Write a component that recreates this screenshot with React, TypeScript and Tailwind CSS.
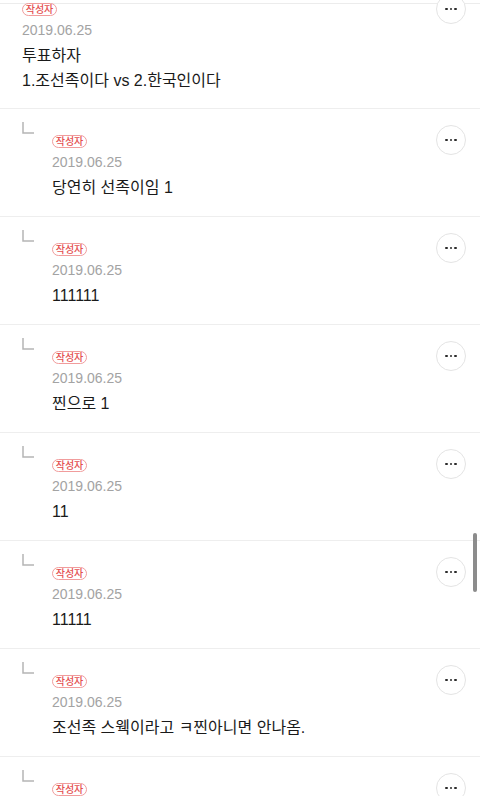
import React from "react";

const FONT = '"Liberation Sans", "Noto Sans CJK KR", sans-serif';

function Badge() {
  return (
    <div className="flex h-[13px] w-[35px] items-center justify-center rounded-full border border-[#f19c9c] text-[10px] font-medium leading-none text-[#e45050]">
      작성자
    </div>
  );
}

function MoreButton({ className = "" }: { className?: string }) {
  return (
    <div
      className={`flex h-[30px] w-[30px] shrink-0 items-center justify-center gap-[2px] rounded-full border border-[#e4e4e4] bg-white ${className}`}
    >
      <span className="h-[2.5px] w-[2.5px] rounded-full bg-[#2a2a2a]" />
      <span className="h-[2.5px] w-[2.5px] rounded-full bg-[#2a2a2a]" />
      <span className="h-[2.5px] w-[2.5px] rounded-full bg-[#2a2a2a]" />
    </div>
  );
}

function Corner() {
  return (
    <svg width="12" height="12" viewBox="0 0 12 12" className="mt-[13px] shrink-0">
      <path d="M1 0 V11 H12" fill="none" stroke="#b5b5b5" strokeWidth="1.5" />
    </svg>
  );
}

function ReplyRow({ text }: { text: string }) {
  return (
    <div className="flex h-[108px] shrink-0 items-start border-t border-[#eeeeee] pl-[22px]">
      <Corner />
      <div className="ml-[18px] mt-[26px] flex-1">
        <Badge />
        <div className="mt-[5px] text-[14px] leading-[18px] text-[#a3a3a3]">2019.06.25</div>
        <div className="mt-[6px] text-[16px] leading-[22px] text-[#1a1a1a]">{text}</div>
      </div>
      <MoreButton className="mr-[14px] mt-[16px]" />
    </div>
  );
}

export default function App() {
  const replies = [
    "당연히 선족이임 1",
    "111111",
    "찐으로 1",
    "11",
    "11111",
    "조선족 스웩이라고 ㅋ찐아니면 안나옴.",
    "ㅋㅋ",
  ];
  return (
    <div
      className="relative flex h-[796px] w-[480px] flex-col overflow-hidden bg-white"
      style={{ fontFamily: FONT }}
    >
      <div className="absolute left-0 top-[3px] h-px w-full bg-[#ececec]" />
      <div className="relative flex h-[108px] shrink-0 items-start pl-[22px]">
        <div className="mt-[3px] flex-1">
          <Badge />
          <div className="mt-[5px] text-[14px] leading-[18px] text-[#a3a3a3]">2019.06.25</div>
          <div className="mt-[4px] text-[16px] leading-[25px] text-[#1a1a1a]">
            <div>투표하자</div>
            <div>1.조선족이다 vs 2.한국인이다</div>
          </div>
        </div>
        <MoreButton className="mr-[14px] mt-[-6px]" />
      </div>
      {replies.map((t, i) => (
        <ReplyRow key={i} text={t} />
      ))}
      <div className="absolute right-[3px] top-[533px] h-[59px] w-[4px] rounded-full bg-[#8c8c8c]" />
    </div>
  );
}
